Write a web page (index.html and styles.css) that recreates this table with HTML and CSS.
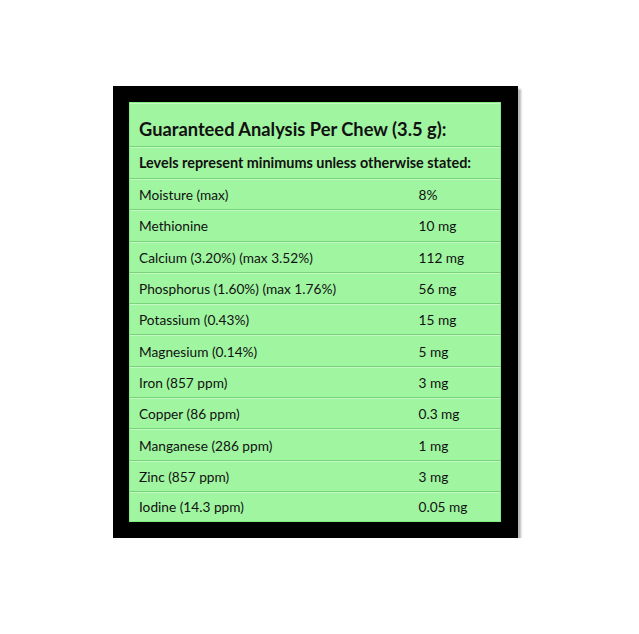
FILE: index.html
```html
<!DOCTYPE html>
<html lang="en">
<head>
    <meta charset="UTF-8">
    <meta name="viewport" content="width=device-width, initial-scale=1.0">
    <title>Guaranteed Analysis</title>
    <link rel="stylesheet" href="styles.css">
</head>
<body>
    <div class="frame">
        <table class="analysis">
            <tr class="title-row">
                <th colspan="2">Guaranteed Analysis Per Chew (3.5 g):</th>
            </tr>
            <tr class="note-row">
                <th colspan="2">Levels represent minimums unless otherwise stated:</th>
            </tr>
            <tr><td>Moisture (max)</td><td>8%</td></tr>
            <tr><td>Methionine</td><td>10 mg</td></tr>
            <tr><td>Calcium (3.20%) (max 3.52%)</td><td>112 mg</td></tr>
            <tr><td>Phosphorus (1.60%) (max 1.76%)</td><td>56 mg</td></tr>
            <tr><td>Potassium (0.43%)</td><td>15 mg</td></tr>
            <tr><td>Magnesium (0.14%)</td><td>5 mg</td></tr>
            <tr><td>Iron (857 ppm)</td><td>3 mg</td></tr>
            <tr><td>Copper (86 ppm)</td><td>0.3 mg</td></tr>
            <tr><td>Manganese (286 ppm)</td><td>1 mg</td></tr>
            <tr><td>Zinc (857 ppm)</td><td>3 mg</td></tr>
            <tr><td>Iodine (14.3 ppm)</td><td>0.05 mg</td></tr>
        </table>
    </div>
</body>
</html>
```

FILE: styles.css
```css
* { box-sizing: border-box; }

body {
    margin: 0;
    padding: 86px 0 0 113px;
    background-color: #ffffff;
    font-family: 'Lato', 'Liberation Sans', sans-serif;
    color: #111111;
}

.frame {
    width: 405px;
    padding: 16px 17px 16px 16px;
    background-color: #000000;
    box-shadow: 3px 3px 2px #b8b8b8;
}

.analysis {
    width: 372px;
    border-collapse: collapse;
    background-color: #a0f5a0;
    border: 1px solid #7ef07e;
    font-size: 13.7px;
}

.analysis th,
.analysis td {
    text-align: left;
    padding: 0 0 0 9px;
    border-bottom: 1px solid #78d478;
    box-shadow: inset 0 1px 0 #c4f8c4;
}

.analysis tr:last-child td {
    border-bottom: none;
}

.title-row th {
    height: 44px;
    padding-top: 8px;
    font-size: 18.3px;
    font-weight: bold;
}

.note-row th {
    height: 32px;
    font-size: 14.4px;
    font-weight: bold;
}

.analysis td {
    height: 31.3px;
    padding-top: 1px;
}

.analysis tr:last-child td {
    height: 30px;
}

.analysis td:first-child {
    width: 280px;
}
```
